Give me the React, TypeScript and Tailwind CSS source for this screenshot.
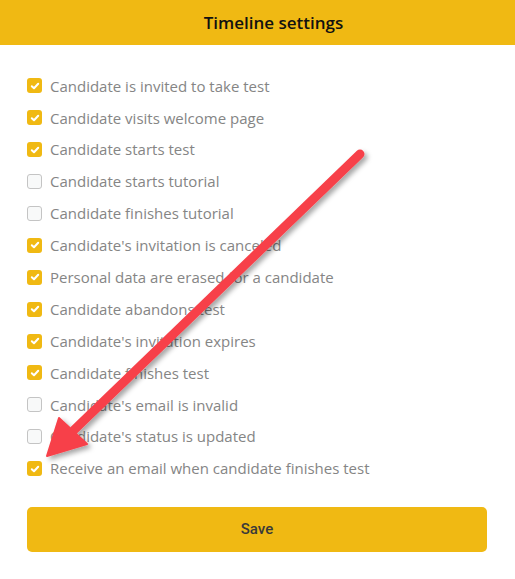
import React from "react";

const items: [string, boolean][] = [
  ["Candidate is invited to take test", true],
  ["Candidate visits welcome page", true],
  ["Candidate starts test", true],
  ["Candidate starts tutorial", false],
  ["Candidate finishes tutorial", false],
  ["Candidate's invitation is canceled", true],
  ["Personal data are erased for a candidate", true],
  ["Candidate abandons test", true],
  ["Candidate's invitation expires", true],
  ["Candidate finishes test", true],
  ["Candidate's email is invalid", false],
  ["Candidate's status is updated", false],
  ["Receive an email when candidate finishes test", true],
];

function Box({ checked }: { checked: boolean }) {
  if (checked) {
    return (
      <span className="flex h-[15px] w-[15px] shrink-0 items-center justify-center rounded-[3px] bg-[#f0b913]">
        <svg width="10" height="10" viewBox="0 0 10 10">
          <path d="M1.8 5.2 L4 7.3 L8.2 2.8" fill="none" stroke="#fff" strokeWidth="2" strokeLinecap="round" strokeLinejoin="round" />
        </svg>
      </span>
    );
  }
  return <span className="h-[15px] w-[15px] shrink-0 rounded-[3px] border border-[#c4c4c4] bg-[#f8f9f9]" />;
}

export default function App() {
  return (
    <div className="relative h-[579px] w-[515px] overflow-hidden bg-white" style={{ fontFamily: '"Open Sans", sans-serif' }}>
      <div className="flex h-[45px] items-center justify-center bg-[#f0b913] pl-[32px] text-[17px] font-semibold text-[#111]">
        Timeline settings
      </div>
      <div className="flex flex-col px-[27px] pt-[25px]">
        {items.map(([label, checked]) => (
          <div key={label} className="flex h-[31.9px] items-center gap-[8px]">
            <Box checked={checked} />
            <span className="text-[15px] text-[#858585]">{label}</span>
          </div>
        ))}
        <button
          className="mt-[22px] h-[45px] w-[460px] rounded-[5px] bg-[#f0b913] text-[15px] font-medium text-[#3a3a3a]"
          style={{ fontFamily: "Roboto, sans-serif" }}
        >
          Save
        </button>
      </div>
      <svg className="pointer-events-none absolute left-0 top-0" width="515" height="579" viewBox="0 0 515 579">
        <defs>
          <filter id="sh" x="-20%" y="-20%" width="140%" height="140%">
            <feDropShadow dx="3" dy="3" stdDeviation="2.5" floodColor="#000" floodOpacity="0.35" />
          </filter>
        </defs>
        <g filter="url(#sh)" fill="#f7414a" stroke="#f7414a">
          <line x1="360" y1="154" x2="74" y2="430" strokeWidth="9" strokeLinecap="round" />
          <path d="M47 456 L59 418 L87 444 Z" strokeWidth="2" strokeLinejoin="round" />
        </g>
      </svg>
    </div>
  );
}
